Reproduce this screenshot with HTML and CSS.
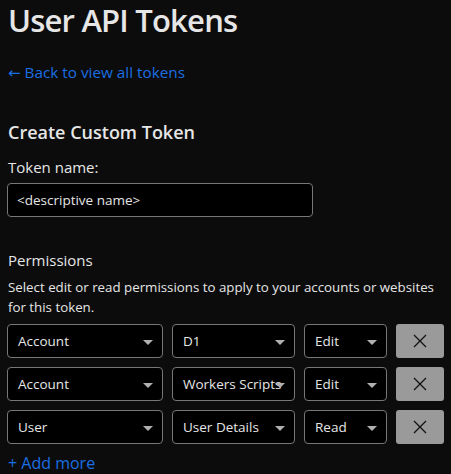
FILE: index.html
```html
<!DOCTYPE html>
<html>
<head>
<meta charset="utf-8">
<link rel="stylesheet" href="styles.css">
</head>
<body>
<div class="page">
  <h1 class="title">User API Tokens</h1>
  <a class="back" href="#"><span class="arrow">←</span> Back to view all tokens</a>
  <h2 class="subtitle">Create Custom Token</h2>
  <label class="label">Token name:</label>
  <div class="input">&lt;descriptive name&gt;</div>
  <div class="perm-title">Permissions</div>
  <p class="desc">Select edit or read permissions to apply to your accounts or websites for this token.</p>
  <div class="rows">
    <div class="row">
      <div class="select s1"><span>Account</span><i class="caret"></i></div>
      <div class="select s2"><span>D1</span><i class="caret"></i></div>
      <div class="select s3"><span>Edit</span><i class="caret"></i></div>
      <div class="remove"><svg width="16" height="16" viewBox="0 0 16 16"><path d="M2 2L14 14M14 2L2 14" stroke="#111" stroke-width="1.3"/></svg></div>
    </div>
    <div class="row">
      <div class="select s1"><span>Account</span><i class="caret"></i></div>
      <div class="select s2"><span>Workers Scripts</span><i class="caret"></i></div>
      <div class="select s3"><span>Edit</span><i class="caret"></i></div>
      <div class="remove"><svg width="16" height="16" viewBox="0 0 16 16"><path d="M2 2L14 14M14 2L2 14" stroke="#111" stroke-width="1.3"/></svg></div>
    </div>
    <div class="row">
      <div class="select s1"><span>User</span><i class="caret"></i></div>
      <div class="select s2"><span>User Details</span><i class="caret"></i></div>
      <div class="select s3"><span>Read</span><i class="caret"></i></div>
      <div class="remove"><svg width="16" height="16" viewBox="0 0 16 16"><path d="M2 2L14 14M14 2L2 14" stroke="#111" stroke-width="1.3"/></svg></div>
    </div>
  </div>
  <a class="add" href="#">+ Add more</a>
</div>
</body>
</html>
```
FILE: styles.css
```css
html, body {
  margin: 0;
  background: #0c0c0c;
}
body {
  font-family: "Open Sans", "Noto Sans", sans-serif;
  color: #e6e6e6;
  font-size: 14px;
}
.page {
  padding: 2px 8px 0;
  display: flex;
  flex-direction: column;
  align-items: flex-start;
}
.title {
  margin: 0;
  font-size: 31px;
  font-weight: 600;
  line-height: 36px;
  letter-spacing: -0.8px;
}
.back {
  margin-top: 24px;
  color: #1b6fe3;
  text-decoration: none;
  font-size: 15.3px;
  line-height: 20px;
  height: 20px;
}
.arrow {
  font-family: "DejaVu Sans", sans-serif;
  font-size: 15px;
  line-height: 1;
}
.subtitle {
  margin: 38px 0 0;
  font-size: 18px;
  font-weight: 600;
  line-height: 24px;
}
.label {
  margin-top: 13px;
  font-size: 15px;
  line-height: 20px;
}
.input {
  margin-top: 6px;
  box-sizing: border-box;
  width: 306px;
  height: 34px;
  margin-left: -1px;
  border: 1px solid #777;
  border-radius: 4px;
  background: #000;
  padding: 0 9px;
  display: flex;
  align-items: center;
  font-size: 13.5px;
}
.perm-title {
  margin-top: 33px;
  font-size: 15px;
  line-height: 20px;
}
.desc {
  margin: 7px 0 0;
  font-size: 13.3px;
  line-height: 20px;
  width: 440px;
}
.rows {
  margin-top: 7px;
  margin-left: -1px;
  display: flex;
  flex-direction: column;
  gap: 9px;
}
.row {
  display: flex;
  gap: 9px;
}
.select {
  box-sizing: border-box;
  height: 34px;
  border: 1px solid #777;
  border-radius: 4px;
  background: #000;
  display: flex;
  align-items: center;
  padding: 0 10px;
  position: relative;
  font-size: 13.5px;
}
.s1 { width: 156px; }
.s2 { width: 123px; }
.s3 { width: 83px; }
.caret {
  position: absolute;
  right: 9px;
  top: 15px;
  width: 0;
  height: 0;
  border-left: 5px solid transparent;
  border-right: 5px solid transparent;
  border-top: 5px solid #b0b0b0;
}
.remove {
  box-sizing: border-box;
  width: 48px;
  height: 34px;
  border-radius: 3px;
  background: #9a9a9a;
  display: flex;
  align-items: center;
  justify-content: center;
}
.add {
  margin-top: 9px;
  color: #1b6fe3;
  text-decoration: none;
  font-size: 16px;
  line-height: 20px;
}
```
